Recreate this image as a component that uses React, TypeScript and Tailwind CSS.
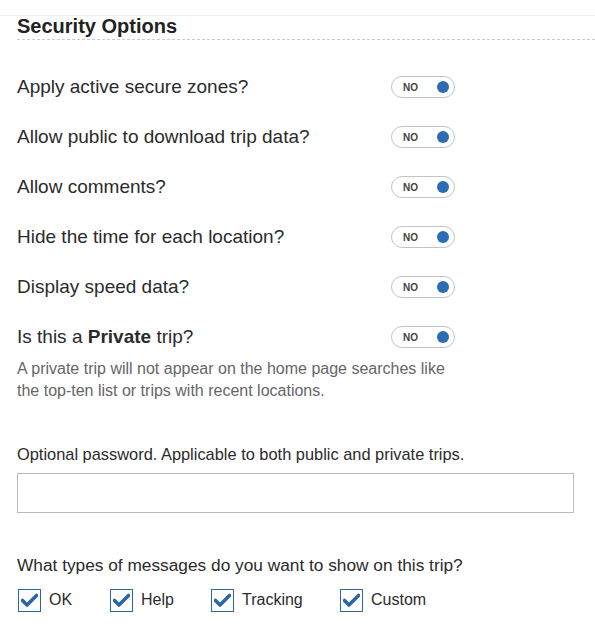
import React from "react";

const font = { fontFamily: '"Liberation Sans", Arial, sans-serif' };

function Toggle() {
  return (
    <div className="flex h-[22px] w-[64px] items-center justify-between rounded-full border border-[#c4c4c4] bg-white pl-[11px] pr-[5px]">
      <span className="text-[10px] font-bold text-[#444]">NO</span>
      <span className="h-[12px] w-[12px] rounded-full bg-[#2a6db5]" />
    </div>
  );
}

function Row({ children }: { children: React.ReactNode }) {
  return (
    <div className="flex h-[50px] items-center">
      <div className="w-[374px] text-[19px] text-[#2b2b2b]">{children}</div>
      <Toggle />
    </div>
  );
}

function Check({ label, w }: { label: string; w: string }) {
  return (
    <label className={`flex items-center ${w}`}>
      <span className="flex h-[23px] w-[23px] items-center justify-center border-[1.5px] border-[#2d66a6] bg-white">
        <svg width="17" height="14" viewBox="0 0 17 14">
          <path d="M1.5 7.5 L6 12 L15.5 2.5" fill="none" stroke="#2d66a6" strokeWidth="3.6" strokeLinejoin="round" strokeLinecap="round" />
        </svg>
      </span>
      <span className="ml-[8px] text-[16px] leading-[24px] text-[#2b2b2b]">{label}</span>
    </label>
  );
}

export default function App() {
  return (
    <div className="relative h-[637px] w-[595px] overflow-hidden bg-white" style={font}>
      <div className="border-t border-[#eeeeee] mt-[15px]" />
      <div className="pl-[17px]">
        <h2 className="-mt-[1px] text-[20px] font-bold leading-[22px] text-[#222]">Security Options</h2>
        <div className="mt-[2px] border-b border-dashed border-[#cccccc]" />
        <div className="mt-[22px]">
          <Row>Apply active secure zones?</Row>
          <Row>Allow public to download trip data?</Row>
          <Row>Allow comments?</Row>
          <Row>Hide the time for each location?</Row>
          <Row>Display speed data?</Row>
          <Row>
            Is this a <b className="font-bold">Private</b> trip?
          </Row>
        </div>
        <p className="-mt-[4px] text-[16px] leading-[22px] text-[#666]">
          A private trip will not appear on the home page searches like
          <br />
          the top-ten list or trips with recent locations.
        </p>
        <p className="mt-[41px] text-[16.4px] leading-[22px] text-[#2b2b2b]">
          Optional password. Applicable to both public and private trips.
        </p>
        <input
          type="password"
          className="mt-[8px] block h-[40px] w-[557px] border border-[#bbbbbb] bg-white outline-none"
        />
        <p className="mt-[41px] text-[17.3px] leading-[22px] text-[#2b2b2b]">
          What types of messages do you want to show on this trip?
        </p>
        <div className="mt-[12px] flex items-center pl-[1px]">
          <Check label="OK" w="w-[92px]" />
          <Check label="Help" w="w-[101px]" />
          <Check label="Tracking" w="w-[129px]" />
          <Check label="Custom" w="" />
        </div>
      </div>
    </div>
  );
}
